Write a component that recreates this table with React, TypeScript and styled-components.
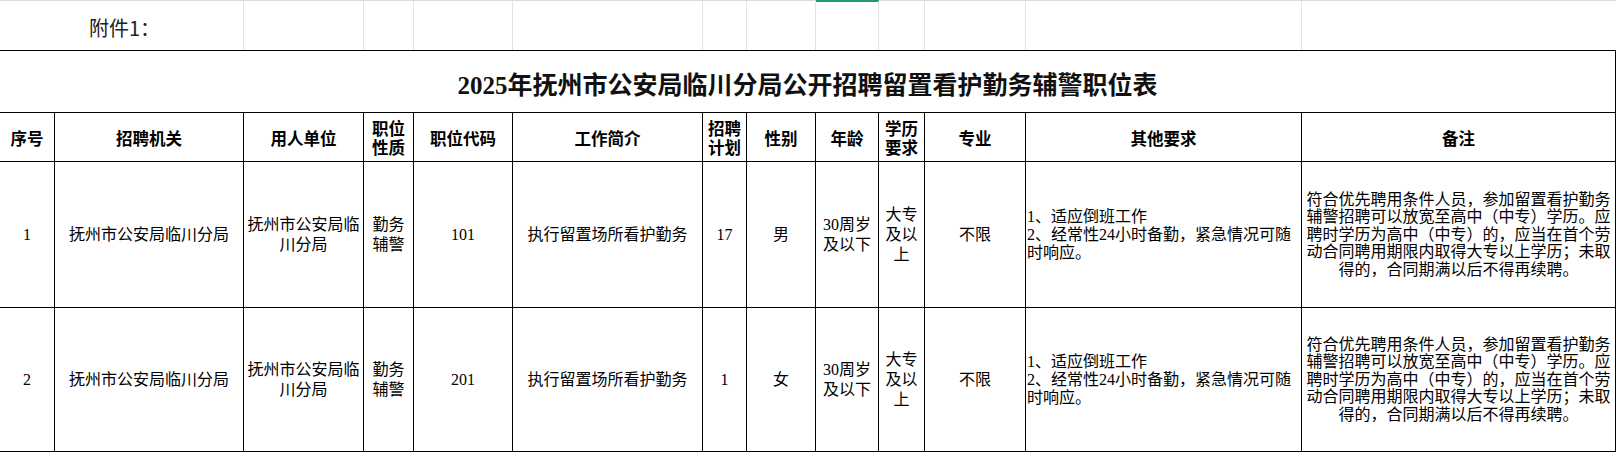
import React from "react";
import styled, { createGlobalStyle } from "styled-components";

const GlobalStyle = createGlobalStyle`
  html, body {
    margin: 0;
    padding: 0;
    background: #fff;
  }
  body {
    font-family: "Noto Sans CJK SC", "Noto Sans", sans-serif;
    color: #000;
  }
  * {
    box-sizing: border-box;
  }
`;

// column widths in px, right border included
const COLS = [55, 189, 120, 50, 99, 190, 44, 69, 63, 46, 101, 276, 314];

const Sheet = styled.div`
  width: 1616px;
  display: grid;
  grid-template-columns: ${COLS.map((w) => `${w}px`).join(" ")};
  grid-template-rows: 50px 63px 49px 146px 144px;
`;

const GridCell = styled.div<{ $span?: number; $active?: boolean; $last?: boolean }>`
  grid-column: span ${(p) => p.$span || 1};
  border-top: ${(p) => (p.$active ? "2px solid #1f9e6c" : "1px solid #dcdcdc")};
  border-right: ${(p) => (p.$last ? "none" : "1px solid #e3e3e3")};
  display: flex;
  align-items: center;
  justify-content: center;
  padding: 4px 0 0 6px;
  font-size: 20px;
  color: #222;
`;

const Title = styled.div`
  grid-column: 1 / -1;
  border-top: 1px solid #000;
  border-bottom: 1px solid #000;
  border-right: 1px solid #000;
  display: flex;
  align-items: center;
  justify-content: center;
  padding-top: 2px;
  font-family: "Liberation Serif", "Noto Sans CJK SC", serif;
  font-size: 25px;
  font-weight: 700;
  color: #111;
`;

const HeadCell = styled.div`
  border-right: 1px solid #000;
  border-bottom: 1px solid #000;
  display: flex;
  align-items: center;
  justify-content: center;
  text-align: center;
  padding: 2px 3px 0;
  font-size: 16.5px;
  line-height: 19px;
  font-weight: 700;
  white-space: pre-line;
`;

const DataCell = styled.div<{ $align?: "left" | "center"; $lh?: number; $pad?: number }>`
  border-right: 1px solid #000;
  border-bottom: 1px solid #000;
  display: flex;
  align-items: center;
  justify-content: ${(p) => (p.$align === "left" ? "flex-start" : "center")};
  text-align: ${(p) => p.$align || "center"};
  padding: 0 ${(p) => (p.$pad ?? (p.$align === "left" ? 1 : 2))}px;
  font-family: "Liberation Serif", "Noto Sans CJK SC", serif;
  font-size: 16px;
  line-height: ${(p) => p.$lh || 20}px;
  white-space: pre-line;
  word-break: break-all;
`;

const HEADERS = [
  "序号",
  "招聘机关",
  "用人单位",
  "职位\n性质",
  "职位代码",
  "工作简介",
  "招聘\n计划",
  "性别",
  "年龄",
  "学历\n要求",
  "专业",
  "其他要求",
  "备注",
];

const OTHER = "1、适应倒班工作\n2、经常性24小时备勤，紧急情况可随时响应。";
const NOTE =
  "符合优先聘用条件人员，参加留置看护勤务辅警招聘可以放宽至高中（中专）学历。应聘时学历为高中（中专）的，应当在首个劳动合同聘用期限内取得大专以上学历；未取得的，合同期满以后不得再续聘。";

const ROWS = [
  { no: "1", code: "101", count: "17", sex: "男" },
  { no: "2", code: "201", count: "1", sex: "女" },
];

function Row({ no, code, count, sex }: (typeof ROWS)[number]) {
  return (
    <>
      <DataCell>{no}</DataCell>
      <DataCell>抚州市公安局临川分局</DataCell>
      <DataCell>抚州市公安局临川分局</DataCell>
      <DataCell>勤务辅警</DataCell>
      <DataCell>{code}</DataCell>
      <DataCell>执行留置场所看护勤务</DataCell>
      <DataCell>{count}</DataCell>
      <DataCell>{sex}</DataCell>
      <DataCell>30周岁及以下</DataCell>
      <DataCell>大专及以上</DataCell>
      <DataCell>不限</DataCell>
      <DataCell $align="left" $lh={18}>
        {OTHER}
      </DataCell>
      <DataCell $lh={17.5} $pad={3}>
        {NOTE}
      </DataCell>
    </>
  );
}

export default function App() {
  return (
    <>
      <GlobalStyle />
      <Sheet>
        <GridCell $span={2}>附件1：</GridCell>
        {COLS.slice(2).map((_, i) => (
          <GridCell key={i} $active={i === 6} $last={i === COLS.length - 3} />
        ))}

        <Title>2025年抚州市公安局临川分局公开招聘留置看护勤务辅警职位表</Title>

        {HEADERS.map((h) => (
          <HeadCell key={h}>{h}</HeadCell>
        ))}

        {ROWS.map((r) => (
          <Row key={r.no} {...r} />
        ))}
      </Sheet>
    </>
  );
}
